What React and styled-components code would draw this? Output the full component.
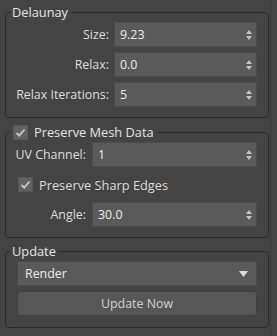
import React from 'react';
import { styled, createGlobalStyle } from 'styled-components';

const Global = createGlobalStyle`
  html, body {
    margin: 0;
    padding: 0;
    background: #444444;
  }
  body {
    font-family: "Open Sans", "Liberation Sans", sans-serif;
    font-size: 12.4px;
    color: #dcdcdc;
  }
`;

const Panel = styled.div`
  width: 271px;
  height: 336px;
  box-sizing: border-box;
  border-right: 1px solid #3b3b3b;
  padding-top: ${p => p.$top}px;
  display: flex;
  flex-direction: column;
`;

const Group = styled.fieldset`
  margin: ${p => p.$gap}px 0 0 5px;
  width: 264px;
  box-sizing: border-box;
  border: 1px solid #2b2b2b;
  border-radius: 4px;
  padding: 2px 11px ${p => p.$bottom}px 4px;
  min-width: 0;
`;

const Legend = styled.legend`
  padding: 0 3px 0 2px;
  height: 16px;
  line-height: 16px;
  font-size: 12.8px;
  color: #e4e4e4;
  display: flex;
  align-items: center;
  gap: 6px;
`;

const CheckLegend = styled(Legend)`
  padding-left: 3px;
`;

const Grid = styled.div`
  display: grid;
  grid-template-columns: ${p => p.$label}px 1fr;
  column-gap: ${p => p.$gap}px;
  row-gap: 5px;
  align-items: center;
`;

const Label = styled.span`
  text-align: right;
  white-space: nowrap;
  color: #dedede;
`;

const Field = styled.div`
  height: 25px;
  box-sizing: border-box;
  background: #5a5a5a;
  border: 1px solid #4c4c4c;
  display: flex;
  align-items: center;
  justify-content: space-between;
  padding: 0 4px 0 ${p => p.$indent || 5}px;
  color: #ececec;
`;

const CheckRow = styled.div`
  grid-column: 1 / 3;
  height: 25px;
  display: flex;
  align-items: center;
  gap: 6px;
  padding-left: 8px;
  font-size: 12.8px;
`;

const Box = styled.span`
  width: 15px;
  height: 15px;
  box-sizing: border-box;
  background: #626262;
  border: 1px solid #575757;
  display: inline-flex;
  align-items: center;
  justify-content: center;
  flex: none;
`;

const Stack = styled.div`
  display: flex;
  flex-direction: column;
  gap: 5px;
  padding-left: 7px;
`;

const Button = styled.button`
  height: 25px;
  box-sizing: border-box;
  background: #575757;
  border: 1px solid #3f3f3f;
  border-radius: 3px;
  font: inherit;
  color: #d2d2d2;
  padding: 0;
`;

const Spinner = () => (
  <svg width="6" height="12" viewBox="0 0 6 12">
    <path d="M0 5 L3 1 L6 5 Z M0 7 L6 7 L3 11 Z" fill="#c4c4c4" />
  </svg>
);

const Arrow = () => (
  <svg width="9" height="6" viewBox="0 0 9 6" style={{ marginRight: 4 }}>
    <path d="M0 0 L9 0 L4.5 6 Z" fill="#dcdcdc" />
  </svg>
);

const Check = () => (
  <Box>
    <svg width="11" height="11" viewBox="0 0 11 11">
      <path d="M1.5 6 L4.2 8.6 L9.5 2.5" stroke="#c8c8c8" strokeWidth="1.8" fill="none" />
    </svg>
  </Box>
);

const Spin = ({ value }) => (
  <Field>
    <span>{value}</span>
    <Spinner />
  </Field>
);

export default function App() {
  return (
    <Panel $top={4}>
      <Global />
      <Group $gap={0} $bottom={10}>
        <Legend>Delaunay</Legend>
        <Grid $label={99} $gap={5}>
          <Label>Size:</Label>
          <Spin value="9.23" />
          <Label>Relax:</Label>
          <Spin value="0.0" />
          <Label>Relax Iterations:</Label>
          <Spin value="5" />
        </Grid>
      </Group>

      <Group $gap={6} $bottom={10}>
        <CheckLegend>
          <Check />
          Preserve Mesh Data
        </CheckLegend>
        <Grid $label={76} $gap={6}>
          <Label>UV Channel:</Label>
          <Spin value="1" />
          <CheckRow>
            <Check />
            Preserve Sharp Edges
          </CheckRow>
          <Label>Angle:</Label>
          <Spin value="30.0" />
        </Grid>
      </Group>

      <Group $gap={5} $bottom={11}>
        <Legend>Update</Legend>
        <Stack>
          <Field $indent={7}>
            <span>Render</span>
            <Arrow />
          </Field>
          <Button>Update Now</Button>
        </Stack>
      </Group>
    </Panel>
  );
}
